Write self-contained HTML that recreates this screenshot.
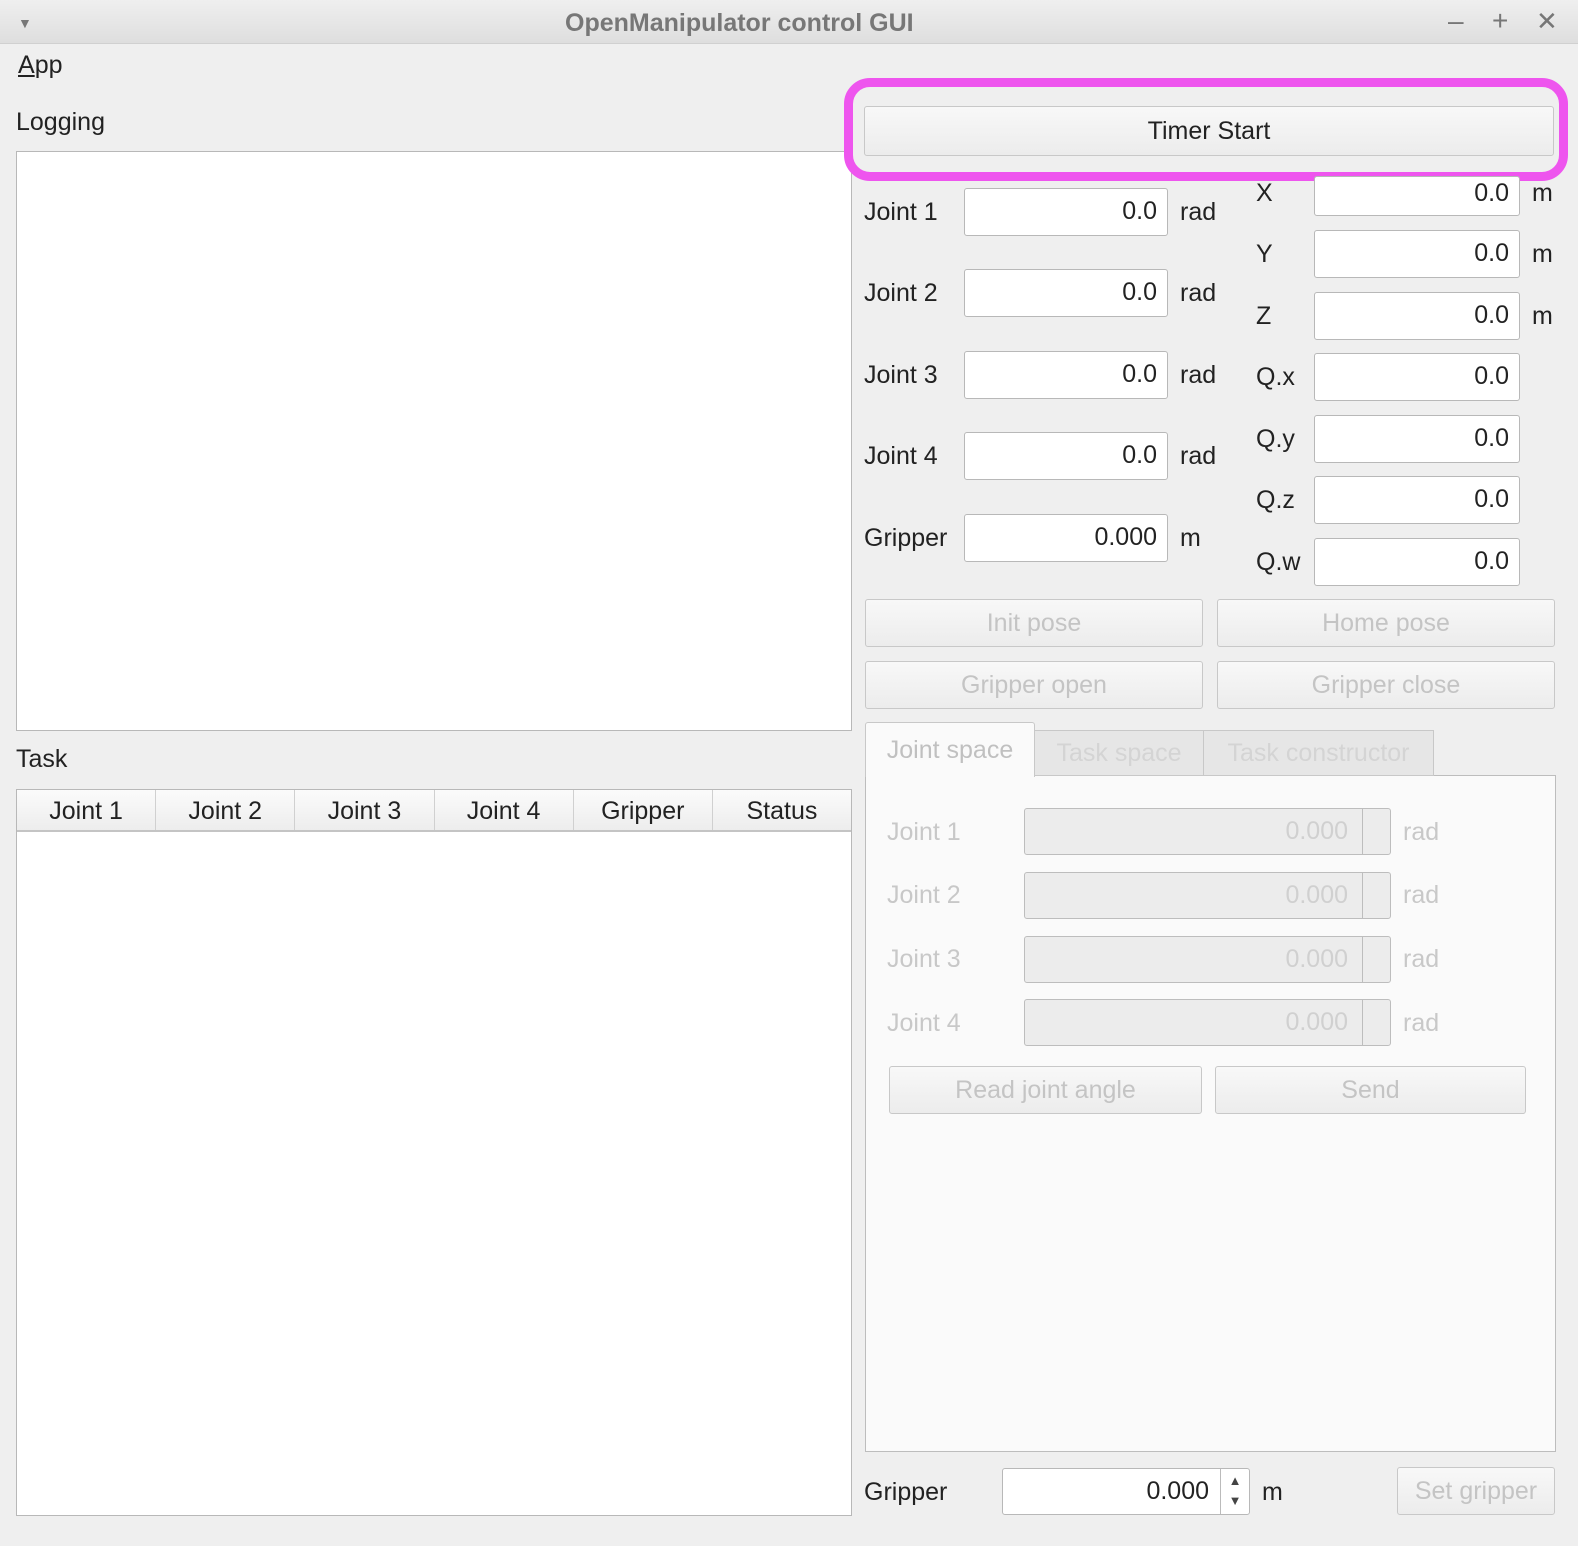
<!DOCTYPE html><html><head><meta charset="utf-8"><style>
*{box-sizing:border-box;margin:0;padding:0}
body{width:1578px;height:1546px;background:#efefef;font-family:"Liberation Sans Narrow","Liberation Sans",sans-serif;font-size:25px;color:#222;position:relative;overflow:hidden}
.a{position:absolute}
.t{position:absolute;white-space:nowrap;line-height:30px}
.in{position:absolute;background:#fff;border:1px solid #b8b8b8;border-radius:3px;text-align:right;padding-right:10px;line-height:44px}
.btn{position:absolute;border:1px solid #c8c8c8;border-radius:3px;background:linear-gradient(#f8f8f8,#ececec);text-align:center;color:#c4c4c4}
.dis{position:absolute;background:#ececec;border:1px solid #bdbdbd;border-radius:3px;color:#d0d0d0;text-align:right;padding-right:42px;line-height:44px}
.dis:after{content:"";position:absolute;right:27px;top:0;bottom:0;border-left:1px solid #bdbdbd}
.g{color:#c8c8c8}
</style></head><body>
<div class="a" style="left:0;top:0;width:1578px;height:44px;background:linear-gradient(#efefef,#dedede);border-bottom:1px solid #d0d0d0"></div>
<div class="t" style="left:18px;top:8px;font-size:14px;color:#777">▼</div>
<div class="t" style="left:565px;top:8px;font-weight:bold;color:#777;font-size:25px">OpenManipulator control GUI</div>
<div class="t" style="left:1448px;top:6px;color:#777;font-size:28px">–</div>
<div class="t" style="left:1492px;top:6px;color:#777;font-size:28px">+</div>
<div class="t" style="left:1536px;top:6px;color:#777;font-size:26px">✕</div>
<div class="t" style="left:18px;top:50px"><u>A</u>pp</div>
<div class="t" style="left:16px;top:107px">Logging</div>
<div class="a" style="left:16px;top:151px;width:836px;height:580px;background:#fff;border:1px solid #b8b8b8"></div>
<div class="t" style="left:16px;top:744px">Task</div>
<div class="a" style="left:16px;top:789px;width:836px;height:727px;background:#fff;border:1px solid #b8b8b8"></div>
<div class="a" style="left:17px;top:790px;width:834px;height:42px;background:linear-gradient(#fbfbfb,#ededed);border-bottom:2px solid #c4c4c4;display:flex">
<div style="flex:1;text-align:center;line-height:42px;border-right:1px solid #d0d0d0">Joint 1</div><div style="flex:1;text-align:center;line-height:42px;border-right:1px solid #d0d0d0">Joint 2</div><div style="flex:1;text-align:center;line-height:42px;border-right:1px solid #d0d0d0">Joint 3</div><div style="flex:1;text-align:center;line-height:42px;border-right:1px solid #d0d0d0">Joint 4</div><div style="flex:1;text-align:center;line-height:42px;border-right:1px solid #d0d0d0">Gripper</div><div style="flex:1;text-align:center;line-height:42px">Status</div></div>
<div class="a" style="left:844px;top:78px;width:724px;height:103px;border:9px solid #ee55ee;border-radius:26px"></div>
<div class="btn" style="left:864px;top:106px;width:690px;height:50px;line-height:48px;color:#222">Timer Start</div>
<div class="t" style="left:864px;top:197px">Joint 1</div><div class="in" style="left:964px;top:188px;width:204px;height:48px">0.0</div><div class="t" style="left:1180px;top:197px">rad</div>
<div class="t" style="left:864px;top:278px">Joint 2</div><div class="in" style="left:964px;top:269px;width:204px;height:48px">0.0</div><div class="t" style="left:1180px;top:278px">rad</div>
<div class="t" style="left:864px;top:360px">Joint 3</div><div class="in" style="left:964px;top:351px;width:204px;height:48px">0.0</div><div class="t" style="left:1180px;top:360px">rad</div>
<div class="t" style="left:864px;top:441px">Joint 4</div><div class="in" style="left:964px;top:432px;width:204px;height:48px">0.0</div><div class="t" style="left:1180px;top:441px">rad</div>
<div class="t" style="left:864px;top:523px">Gripper</div><div class="in" style="left:964px;top:514px;width:204px;height:48px">0.000</div><div class="t" style="left:1180px;top:523px">m</div>
<div class="in" style="left:1314px;top:176px;width:206px;height:40px;line-height:32px">0.0</div><div class="t" style="left:1256px;top:178px">X</div><div class="t" style="left:1532px;top:178px">m</div>
<div class="t" style="left:1256px;top:239px">Y</div><div class="in" style="left:1314px;top:230px;width:206px;height:48px">0.0</div><div class="t" style="left:1532px;top:239px">m</div>
<div class="t" style="left:1256px;top:301px">Z</div><div class="in" style="left:1314px;top:292px;width:206px;height:48px">0.0</div><div class="t" style="left:1532px;top:301px">m</div>
<div class="t" style="left:1256px;top:362px">Q.x</div><div class="in" style="left:1314px;top:353px;width:206px;height:48px">0.0</div>
<div class="t" style="left:1256px;top:424px">Q.y</div><div class="in" style="left:1314px;top:415px;width:206px;height:48px">0.0</div>
<div class="t" style="left:1256px;top:485px">Q.z</div><div class="in" style="left:1314px;top:476px;width:206px;height:48px">0.0</div>
<div class="t" style="left:1256px;top:547px">Q.w</div><div class="in" style="left:1314px;top:538px;width:206px;height:48px">0.0</div>
<div class="btn" style="left:865px;top:599px;width:338px;height:48px;line-height:46px">Init pose</div>
<div class="btn" style="left:1217px;top:599px;width:338px;height:48px;line-height:46px">Home pose</div>
<div class="btn" style="left:865px;top:661px;width:338px;height:48px;line-height:46px">Gripper open</div>
<div class="btn" style="left:1217px;top:661px;width:338px;height:48px;line-height:46px">Gripper close</div>
<div class="a" style="left:865px;top:775px;width:691px;height:677px;background:#fafafa;border:1px solid #bdbdbd"></div>
<div class="a" style="left:1034px;top:730px;width:170px;height:46px;background:#e6e6e6;border:1px solid #c8c8c8;color:#d4d4d4;text-align:center;line-height:44px">Task space</div>
<div class="a" style="left:1203px;top:730px;width:231px;height:46px;background:#e6e6e6;border:1px solid #c8c8c8;color:#d4d4d4;text-align:center;line-height:44px">Task constructor</div>
<div class="a" style="left:865px;top:722px;width:170px;height:55px;background:#fafafa;border:1px solid #c8c8c8;border-bottom:none;border-radius:3px 3px 0 0;color:#c0c0c0;text-align:center;line-height:54px">Joint space</div>
<div class="t g" style="left:887px;top:817px">Joint 1</div><div class="dis" style="left:1024px;top:808px;width:367px;height:47px">0.000</div><div class="t g" style="left:1403px;top:817px">rad</div>
<div class="t g" style="left:887px;top:880px">Joint 2</div><div class="dis" style="left:1024px;top:872px;width:367px;height:47px">0.000</div><div class="t g" style="left:1403px;top:880px">rad</div>
<div class="t g" style="left:887px;top:944px">Joint 3</div><div class="dis" style="left:1024px;top:936px;width:367px;height:47px">0.000</div><div class="t g" style="left:1403px;top:944px">rad</div>
<div class="t g" style="left:887px;top:1008px">Joint 4</div><div class="dis" style="left:1024px;top:999px;width:367px;height:47px">0.000</div><div class="t g" style="left:1403px;top:1008px">rad</div>
<div class="btn" style="left:889px;top:1066px;width:313px;height:48px;line-height:46px">Read joint angle</div>
<div class="btn" style="left:1215px;top:1066px;width:311px;height:48px;line-height:46px">Send</div>
<div class="t" style="left:864px;top:1477px">Gripper</div>
<div class="in" style="left:1002px;top:1468px;width:248px;height:47px;padding-right:40px">0.000</div>
<div class="a" style="left:1220px;top:1469px;width:29px;height:45px;border-left:1px solid #bbb;text-align:center;font-size:13px;line-height:20px;color:#444;padding-top:2px">▲<br>▼</div>
<div class="t" style="left:1262px;top:1477px">m</div>
<div class="btn" style="left:1397px;top:1467px;width:158px;height:48px;line-height:46px">Set gripper</div>
</body></html>
